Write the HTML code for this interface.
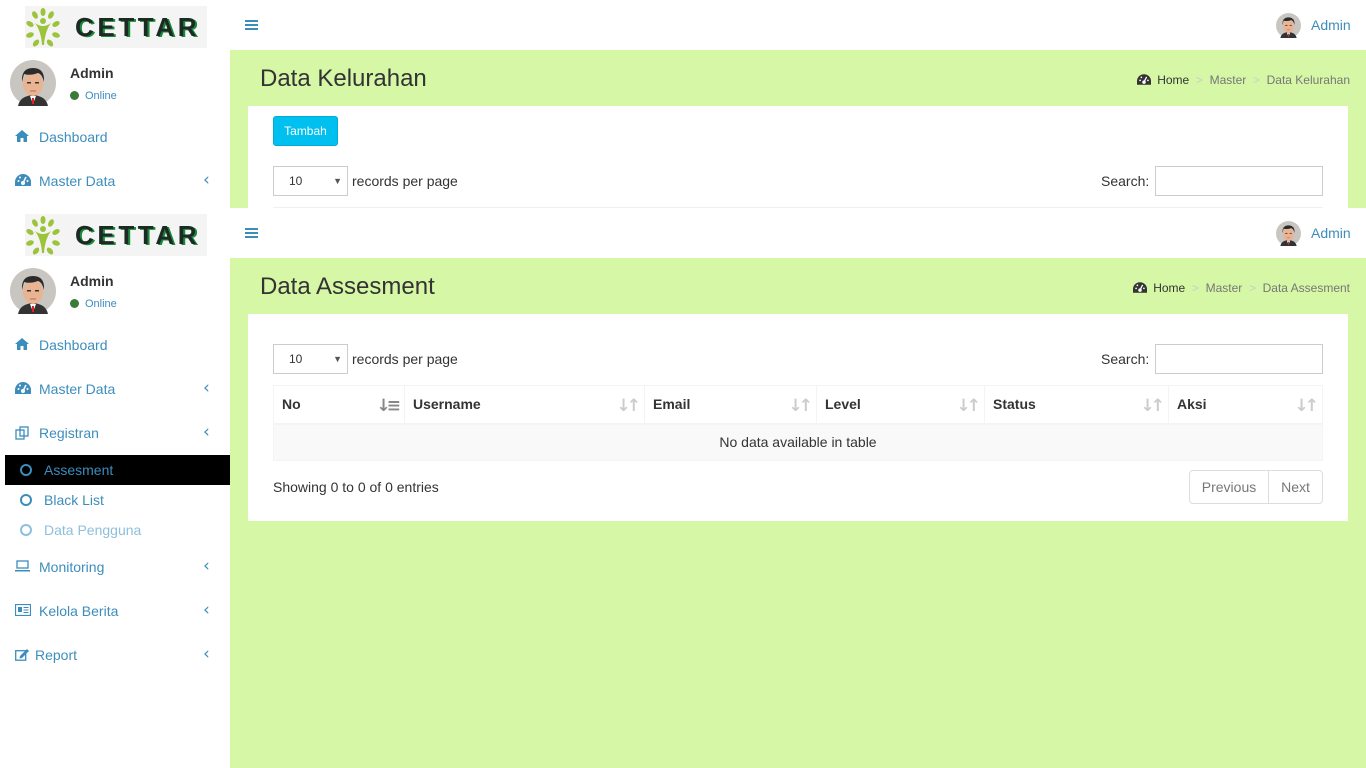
<!DOCTYPE html>
<html><head><meta charset="utf-8">
<style>
*{box-sizing:border-box;margin:0;padding:0}
body{width:1366px;height:768px;overflow:hidden;position:relative;background:#d6f7a6;font-family:"Liberation Sans",Arial,sans-serif;font-size:14px;color:#333}
.abs{position:absolute}
.side{left:0;width:230px;background:#fff}
.logo{left:25px;width:182px;height:42px;background:#f4f4f4;overflow:hidden}
.logo span{position:absolute;left:50px;top:6px;font-size:26px;font-weight:bold;letter-spacing:3.6px;color:#1d2a24;text-shadow:2px 1px 0 #1b8a3a}
.hdr{left:230px;width:1136px;height:50px;background:#fff}
.bars{left:245px;width:13px;height:2px;background:#3c8dbc;box-shadow:0 4px 0 #3c8dbc,0 8px 0 #3c8dbc}
.blue{color:#3c8dbc}
.menu{left:15px;color:#3c8dbc;font-size:14px}
.menu svg{position:absolute;left:0;top:1px}
.menu b{font-weight:normal;position:absolute;left:24px;white-space:nowrap}
.chev{left:203px;color:#3c8dbc;font-size:17px;line-height:14px;font-family:"DejaVu Sans",sans-serif}
.title{font-size:24px;color:#333;left:260px}
.bc{right:16px;font-size:12px;color:#777}
.bc .h{color:#333}
.box{background:#fff;left:248px;width:1100px}
.sel{border:1px solid #ccc;width:75px;height:30px;font-size:12px;padding:7px 0 0 15px;background:#fff}
.sel:after{content:"▼";position:absolute;right:5px;top:9px;font-size:9px;color:#555}
.inp{border:1px solid #ccc;width:168px;height:30px;background:#fff}
th{font-weight:bold;text-align:left;padding:0 8px;height:38px;border-right:1px solid #f4f4f4;position:relative;font-size:14px}
th i{position:absolute;right:7px;top:10px;color:#ccc;font-style:normal;font-size:17px;font-weight:bold;letter-spacing:-4px;font-family:"DejaVu Sans",sans-serif}
</style></head><body>
<svg width="0" height="0" style="position:absolute"><defs>
<symbol id="av" viewBox="0 0 46 46"><circle cx="23" cy="23" r="23" fill="#c9c6c2"/><path d="M8 46 Q10 36 23 35 Q36 36 38 46Z" fill="#333"/><path d="M20 36 L23 44 L26 36Z" fill="#fff"/><rect x="22" y="38" width="2" height="6" fill="#d22"/><ellipse cx="23" cy="24" rx="10" ry="12" fill="#e9b492"/><path d="M12 22 Q11 8 23 8 Q35 8 34 22 Q32 14 28 13 Q20 16 14 14Z" fill="#2b2b2b"/><rect x="17" y="22" width="4" height="1.5" fill="#333"/><rect x="25" y="22" width="4" height="1.5" fill="#333"/><path d="M20 31 h6" stroke="#b66" stroke-width="1"/></symbol>
<symbol id="leaf" viewBox="0 0 36 42"><g fill="#9cc43a"><ellipse cx="18" cy="5" rx="2.5" ry="4"/><ellipse cx="10" cy="8" rx="2.5" ry="4" transform="rotate(-30 10 8)"/><ellipse cx="26" cy="8" rx="2.5" ry="4" transform="rotate(30 26 8)"/><ellipse cx="5" cy="17" rx="2.5" ry="4" transform="rotate(-60 5 17)"/><ellipse cx="31" cy="17" rx="2.5" ry="4" transform="rotate(60 31 17)"/><ellipse cx="5" cy="28" rx="2.5" ry="4" transform="rotate(-110 5 28)"/><ellipse cx="31" cy="28" rx="2.5" ry="4" transform="rotate(110 31 28)"/><ellipse cx="11" cy="36" rx="2.5" ry="4" transform="rotate(-140 11 36)"/><ellipse cx="25" cy="36" rx="2.5" ry="4" transform="rotate(140 25 36)"/><path d="M10 16 Q18 22 26 16 Q20 24 19 38 L17 38 Q16 24 10 16Z"/><circle cx="18" cy="14" r="3"/></g></symbol>
<symbol id="home" viewBox="0 0 14 12"><path d="M7 0 L14 6 L12 6 L12 12 L8.5 12 L8.5 8 L5.5 8 L5.5 12 L2 12 L2 6 L0 6Z" fill="#3c8dbc"/></symbol>
<symbol id="dash" viewBox="0 0 16 12"><path d="M8 0 A8 8 0 0 0 0 8 L0 12 L16 12 L16 8 A8 8 0 0 0 8 0Z" fill="currentColor"/><circle cx="8" cy="9" r="2" fill="#fff"/><path d="M8 9 L11 3" stroke="#fff" stroke-width="1.5"/><circle cx="3.5" cy="7" r="1" fill="#fff"/><circle cx="5" cy="3.5" r="1" fill="#fff"/><circle cx="12.5" cy="7" r="1" fill="#fff"/></symbol>
</defs></svg>

<!-- ===== PAGE 1 (top) ===== -->
<div class="abs side" style="top:0;height:208px"></div>
<div class="abs logo" style="top:6px"><svg class="abs" style="left:0;top:1px" width="36" height="42"><use href="#leaf"/></svg><span>CETTAR</span></div>
<svg class="abs" style="left:10px;top:60px" width="46" height="46"><use href="#av"/></svg>
<div class="abs" style="left:70px;top:65px;font-weight:bold;font-size:14px">Admin</div>
<div class="abs" style="left:70px;top:90px;font-size:11px;color:#3c8dbc"><span style="display:inline-block;width:9px;height:9px;border-radius:50%;background:#3d7a3a;margin-right:6px;vertical-align:-1px"></span>Online</div>
<div class="abs menu" style="top:129px"><svg width="14" height="12"><use href="#home"/></svg><b>Dashboard</b></div>
<div class="abs menu" style="top:173px"><svg width="16" height="12" style="color:#3c8dbc"><use href="#dash"/></svg><b>Master Data</b></div>
<div class="abs chev" style="top:173px">‹</div>

<div class="abs hdr" style="top:0"></div>
<div class="abs bars" style="top:20px"></div>
<svg class="abs" style="left:1276px;top:13px" width="25" height="25"><use href="#av"/></svg>
<div class="abs blue" style="left:1311px;top:17px;font-size:14px">Admin</div>
<div class="abs title" style="top:65px">Data Kelurahan</div>
<div class="abs bc" style="top:73px"><svg width="14" height="11" style="color:#333;vertical-align:-1px;margin-right:6px"><use href="#dash"/></svg><span class="h">Home</span> &nbsp;<span style="color:#ccc">&gt;</span>&nbsp; Master &nbsp;<span style="color:#ccc">&gt;</span>&nbsp; Data Kelurahan</div>
<div class="abs box" style="top:106px;height:102px"></div>
<div class="abs" style="left:273px;top:116px;width:65px;height:30px;background:#00c0ef;border:1px solid #00acd6;border-radius:3px;color:#fff;font-size:12px;text-align:center;line-height:28px">Tambah</div>
<div class="abs sel" style="left:273px;top:166px">10</div>
<div class="abs" style="left:352px;top:173px">records per page</div>
<div class="abs" style="left:1101px;top:173px">Search:</div>
<div class="abs inp" style="left:1155px;top:166px"></div>
<div class="abs" style="left:273px;top:207px;width:1050px;height:1px;background:#f0f0f0"></div>

<!-- ===== PAGE 2 ===== -->
<div class="abs side" style="top:208px;height:560px"></div>
<div class="abs logo" style="top:214px"><svg class="abs" style="left:0;top:1px" width="36" height="42"><use href="#leaf"/></svg><span>CETTAR</span></div>
<svg class="abs" style="left:10px;top:268px" width="46" height="46"><use href="#av"/></svg>
<div class="abs" style="left:70px;top:273px;font-weight:bold;font-size:14px">Admin</div>
<div class="abs" style="left:70px;top:298px;font-size:11px;color:#3c8dbc"><span style="display:inline-block;width:9px;height:9px;border-radius:50%;background:#3d7a3a;margin-right:6px;vertical-align:-1px"></span>Online</div>
<div class="abs menu" style="top:337px"><svg width="14" height="12"><use href="#home"/></svg><b>Dashboard</b></div>
<div class="abs menu" style="top:381px"><svg width="16" height="12" style="color:#3c8dbc"><use href="#dash"/></svg><b>Master Data</b></div>
<div class="abs chev" style="top:381px">‹</div>
<div class="abs menu" style="top:425px"><svg width="15" height="14"><rect x="1" y="4" width="8" height="9" fill="none" stroke="#3c8dbc" stroke-width="1.3"/><rect x="5" y="1" width="8" height="9" fill="none" stroke="#3c8dbc" stroke-width="1.3"/></svg><b>Registran</b></div>
<div class="abs chev" style="top:425px">‹</div>
<div class="abs" style="left:5px;top:455px;width:225px;height:30px;background:#000"></div>
<div class="abs" style="left:20px;top:464px;width:12px;height:12px;border:2px solid #3c8dbc;border-radius:50%"></div>
<div class="abs blue" style="left:44px;top:462px">Assesment</div>
<div class="abs" style="left:20px;top:494px;width:12px;height:12px;border:2px solid #3c8dbc;border-radius:50%"></div>
<div class="abs blue" style="left:44px;top:492px">Black List</div>
<div class="abs" style="left:20px;top:524px;width:12px;height:12px;border:2px solid #8ebfdc;border-radius:50%"></div>
<div class="abs" style="left:44px;top:522px;color:#8ebfdc">Data Pengguna</div>
<div class="abs menu" style="top:559px"><svg width="16" height="12"><rect x="2" y="1" width="11" height="7" fill="none" stroke="#3c8dbc" stroke-width="1.3"/><rect x="0" y="10" width="15" height="1.5" fill="#3c8dbc"/></svg><b>Monitoring</b></div>
<div class="abs chev" style="top:559px">‹</div>
<div class="abs menu" style="top:603px"><svg width="16" height="12"><rect x="0.5" y="0.5" width="15" height="11" fill="none" stroke="#3c8dbc" stroke-width="1.2"/><rect x="3" y="3" width="4" height="5" fill="#3c8dbc"/><path d="M8.5 3.5h5M8.5 6h5M8.5 8.5h5" stroke="#3c8dbc"/></svg><b>Kelola Berita</b></div>
<div class="abs chev" style="top:603px">‹</div>
<div class="abs menu" style="top:647px"><svg width="15" height="13"><rect x="0.7" y="2.7" width="10" height="9.5" fill="none" stroke="#3c8dbc" stroke-width="1.3"/><path d="M5 8 L12 1 L14 3 L7 10 L4.5 10.5Z" fill="#3c8dbc"/></svg><b style="left:20px">Report</b></div>
<div class="abs chev" style="top:647px">‹</div>

<div class="abs hdr" style="top:208px"></div>
<div class="abs bars" style="top:228px"></div>
<svg class="abs" style="left:1276px;top:221px" width="25" height="25"><use href="#av"/></svg>
<div class="abs blue" style="left:1311px;top:225px;font-size:14px">Admin</div>
<div class="abs title" style="top:273px">Data Assesment</div>
<div class="abs bc" style="top:281px"><svg width="14" height="11" style="color:#333;vertical-align:-1px;margin-right:6px"><use href="#dash"/></svg><span class="h">Home</span> &nbsp;<span style="color:#ccc">&gt;</span>&nbsp; Master &nbsp;<span style="color:#ccc">&gt;</span>&nbsp; Data Assesment</div>
<div class="abs box" style="top:314px;height:207px"></div>
<div class="abs sel" style="left:273px;top:344px">10</div>
<div class="abs" style="left:352px;top:351px">records per page</div>
<div class="abs" style="left:1101px;top:351px">Search:</div>
<div class="abs inp" style="left:1155px;top:344px"></div>
<table class="abs" style="left:273px;top:385px;width:1050px;border-collapse:collapse;border:1px solid #f4f4f4">
<tr style="border-bottom:2px solid #f4f4f4">
<th style="width:131px">No<i style="color:#888">↓≡</i></th>
<th style="width:240px">Username<i>↓↑</i></th>
<th style="width:172px">Email<i>↓↑</i></th>
<th style="width:168px">Level<i>↓↑</i></th>
<th style="width:184px">Status<i>↓↑</i></th>
<th>Aksi<i>↓↑</i></th></tr>
<tr><td colspan="6" style="background:#f9f9f9;height:37px;text-align:center">No data available in table</td></tr>
</table>
<div class="abs" style="left:273px;top:479px">Showing 0 to 0 of 0 entries</div>
<div class="abs" style="left:1189px;top:470px;width:134px;height:34px;border:1px solid #ddd;border-radius:4px;background:#fff;color:#777;display:flex">
<div style="width:79px;border-right:1px solid #ddd;text-align:center;line-height:32px">Previous</div>
<div style="flex:1;text-align:center;line-height:32px">Next</div></div>
</body></html>
